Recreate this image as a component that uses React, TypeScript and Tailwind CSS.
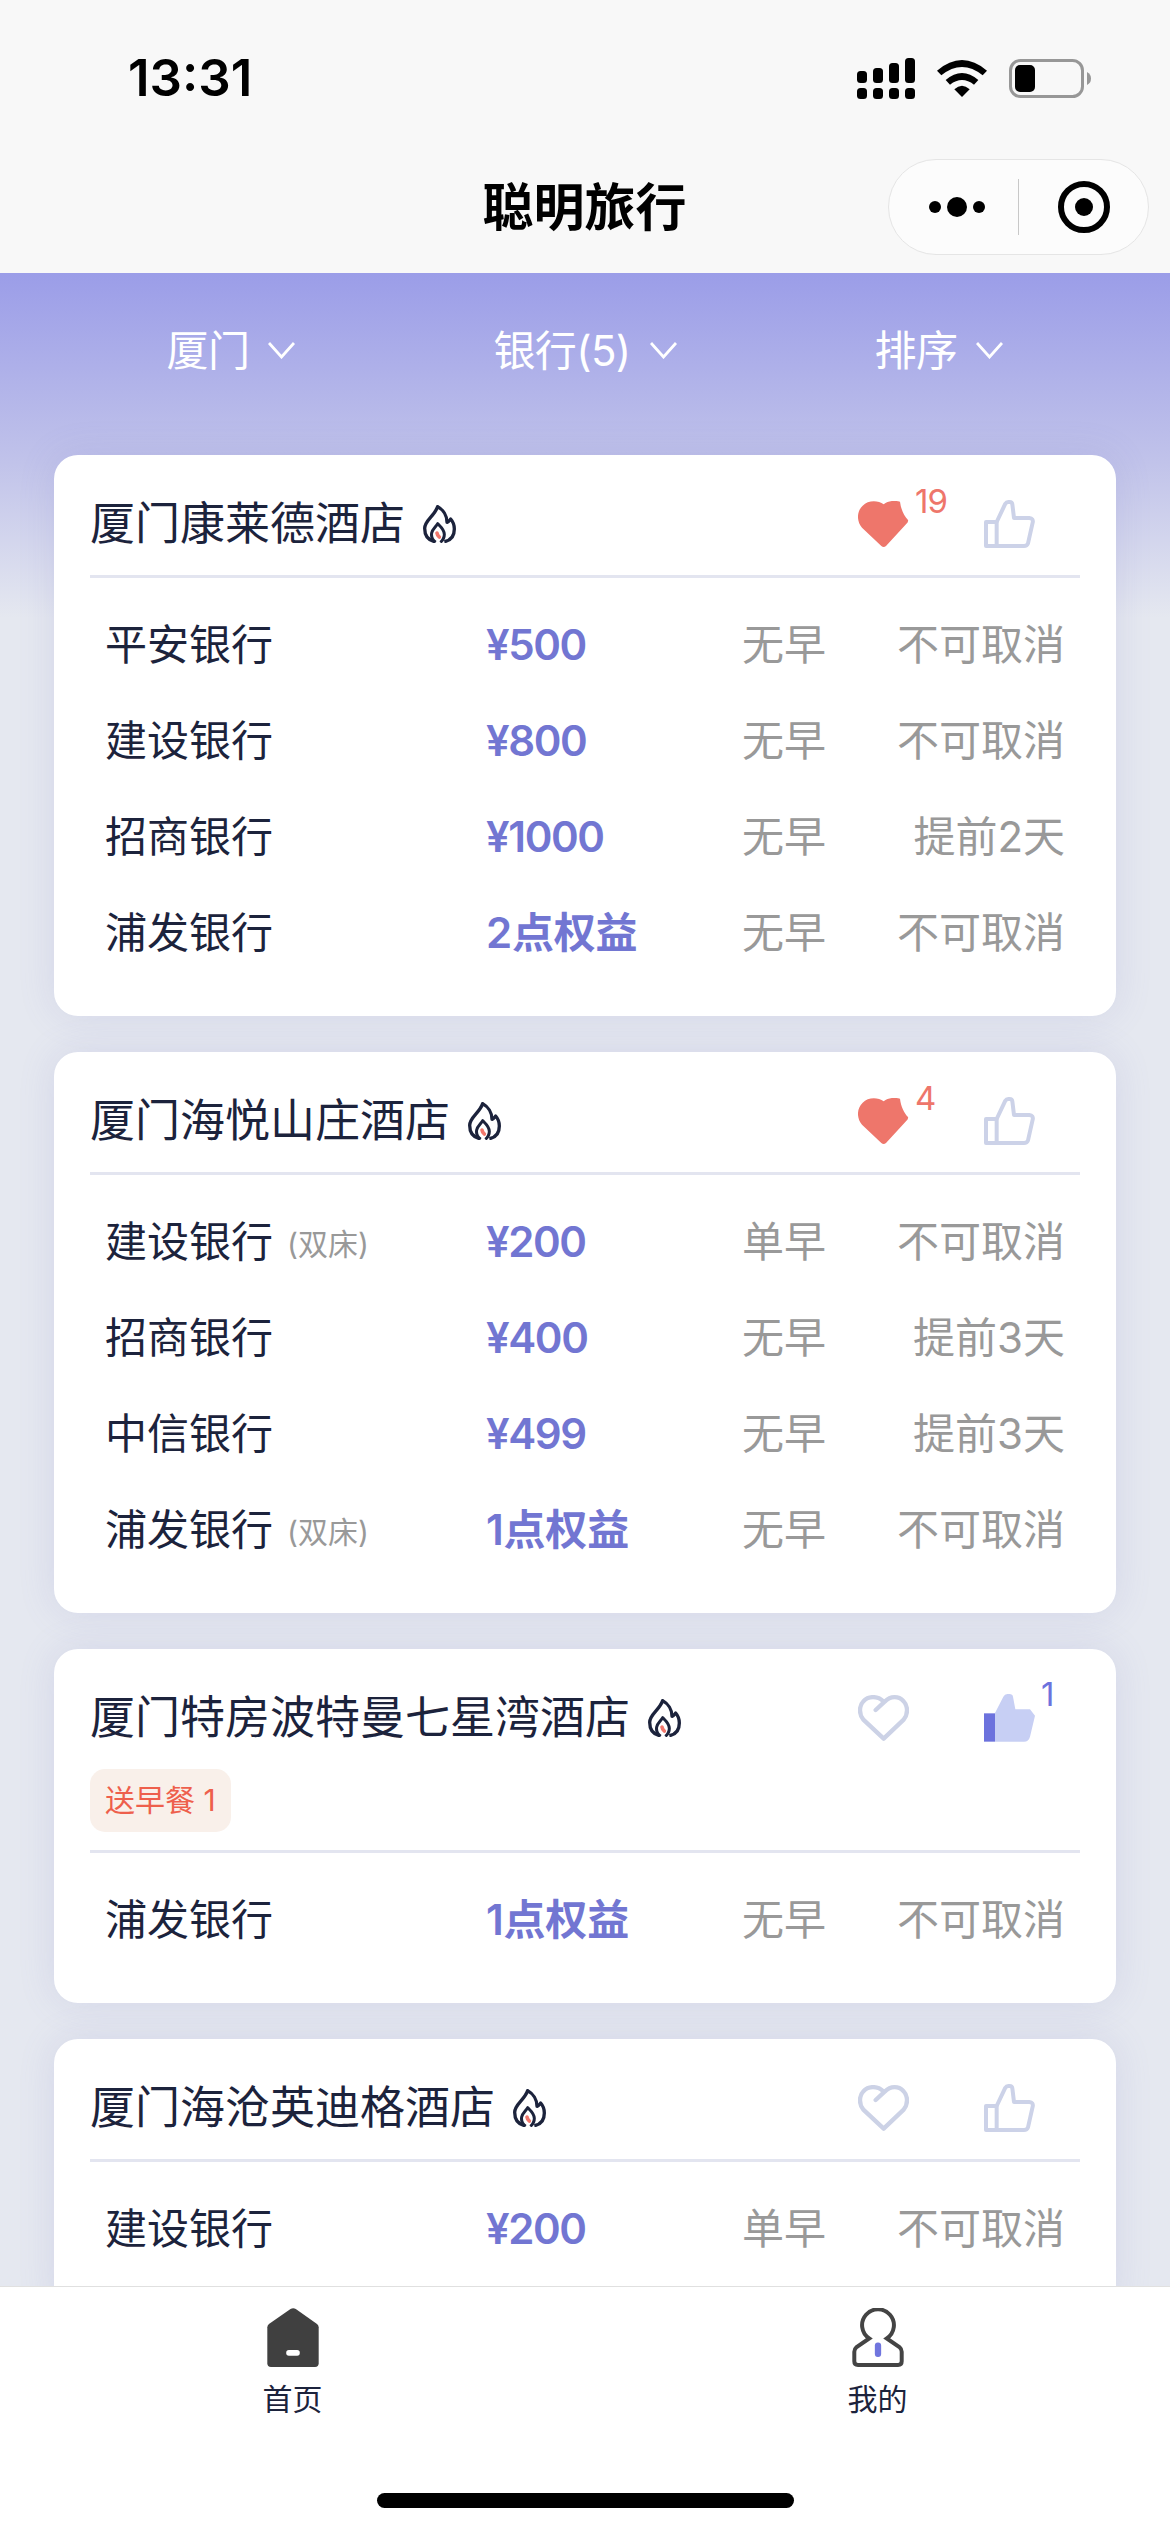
import { ReactNode } from 'react'
import clsx from 'clsx'

interface Offer {
    bank: string;
    note?: string;
    price: string;
    breakfast: string;
    cancel: string;
}

interface Hotel {
    name: string;
    tag?: string;
    likes?: number;
    thumbs?: number;
    offers: Offer[];
}

const filters = ['厦门', '银行(5)', '排序'];

const hotels: Hotel[] = [
    {
        name: '厦门康莱德酒店',
        likes: 19,
        offers: [
            { bank: '平安银行', price: '¥500', breakfast: '无早', cancel: '不可取消' },
            { bank: '建设银行', price: '¥800', breakfast: '无早', cancel: '不可取消' },
            { bank: '招商银行', price: '¥1000', breakfast: '无早', cancel: '提前2天' },
            { bank: '浦发银行', price: '2点权益', breakfast: '无早', cancel: '不可取消' },
        ],
    },
    {
        name: '厦门海悦山庄酒店',
        likes: 4,
        offers: [
            { bank: '建设银行', note: '(双床)', price: '¥200', breakfast: '单早', cancel: '不可取消' },
            { bank: '招商银行', price: '¥400', breakfast: '无早', cancel: '提前3天' },
            { bank: '中信银行', price: '¥499', breakfast: '无早', cancel: '提前3天' },
            { bank: '浦发银行', note: '(双床)', price: '1点权益', breakfast: '无早', cancel: '不可取消' },
        ],
    },
    {
        name: '厦门特房波特曼七星湾酒店',
        tag: '送早餐 1',
        thumbs: 1,
        offers: [
            { bank: '浦发银行', price: '1点权益', breakfast: '无早', cancel: '不可取消' },
        ],
    },
    {
        name: '厦门海沧英迪格酒店',
        offers: [
            { bank: '建设银行', price: '¥200', breakfast: '单早', cancel: '不可取消' },
        ],
    },
];

const SignalIcon = () => (
    <svg width="58" height="41" viewBox="0 0 58 41">
        <rect x="0" y="13" width="10" height="12" rx="3.5" />
        <rect x="16" y="10" width="10" height="15" rx="3.5" />
        <rect x="32" y="5" width="10" height="20" rx="3.5" />
        <rect x="48" y="0" width="10" height="25" rx="3.5" />
        {[0, 16, 32, 48].map((x) => (
            <rect key={x} x={x} y="30" width="10" height="11" rx="3.5" />
        ))}
    </svg>
)

const WifiIcon = () => (
    <svg width="50" height="37" viewBox="0 0 150 111">
        <path d="M0 32 Q75 -32 150 32 L137 46 Q75 -4 13 46 Z" />
        <path d="M26 60 Q75 18 124 60 L111 74 Q75 46 39 74 Z" />
        <path d="M52 88 Q75 66 98 88 L75 111 Z" />
    </svg>
)

const BatteryIcon = () => (
    <svg width="82" height="39" viewBox="0 0 82 39">
        <rect x="1.5" y="1.5" width="72" height="36" rx="10" fill="none" stroke="#979797" strokeWidth="3" />
        <rect x="6" y="6" width="20" height="27" rx="5" />
        <path d="M78 13 Q82 15 82 19.500 Q82 24 78 26 Z" fill="#979797" />
    </svg>
)

const FlameIcon = () => (
    <svg width="33" height="38" viewBox="0 0 99 114" fill="none" stroke="#1c233c" strokeWidth="10" strokeLinejoin="round">
        <path d="M36 110 C14 106 5 90 5 70 C5 46 34 34 44 5 C60 14 72 32 72 52 C78 50 80 46 83 42 C92 52 94 60 94 72 C94 92 86 106 64 110" />
        <path d="M38 112 C28 105 24 96 26 84 C28 72 38 66 44 56 C54 66 64 74 64 88 C64 98 60 106 52 112" strokeWidth="9" />
        <path d="M42 84 Q43 92 49 96" stroke="#f1776c" strokeWidth="11" strokeLinecap="round" />
    </svg>
)

const HeartIcon = ({ active }: { active: boolean }) => (
    <svg width="51" height="46" viewBox="0 0 153 138">
        {active ? (
            <path fill="#ee766b" d="M77 10 C60 -3 30 -3 14 14 C-5 32 -4 62 12 80 L70 135 Q77 141 84 135 L144 70 Q152 62 150 57 C138 44 129 26 126 2 C106 -3 90 0 77 10Z" />
        ) : (
            <path
                fill="none"
                stroke="#ccd2e6"
                strokeWidth="13"
                strokeLinecap="round"
                strokeLinejoin="round"
                d="M53 45 L80 20 C98 2 122 3 136 18 C151 33 150 58 137 74 L77 131 L16 74 C3 58 2 33 17 18 C31 3 58 2 75 18"
            />
        )}
    </svg>
)

const ThumbIcon = ({ active }: { active: boolean }) => (
    <svg width="51" height="48" viewBox="0 0 153 144">
        {active ? (
            <>
                <path fill="#c7cff4" d="M33 57 L58 8 Q62 0 70 0 H76 Q86 0 87 8 L94 46 H138 L153 65 L138 128 Q134 143 120 143 H33Z" />
                <path fill="#6c72dd" d="M0 58 H33 V143 H0Z" />
            </>
        ) : (
            <g fill="none" stroke="#ccd2e8" strokeWidth="12" strokeLinejoin="round">
                <path d="M6 66 H38 V138 H6Z" />
                <path d="M38 66 L64 11 Q67 6 73 6 H77 Q84 6 85 13 L90 54 H136 Q149 55 146 68 L132 130 Q129 138 120 138 H38" />
            </g>
        )}
    </svg>
)

const HomeIcon = () => (
    <svg width="52" height="59" viewBox="0 0 155 178">
        <path fill="#404040" d="M70 3 Q78 -2 86 3 L150 48 Q155 52 155 58 V167 Q155 178 144 178 H11 Q0 178 0 167 V58 Q0 52 5 48Z" />
        <rect x="57" y="127" width="41" height="17" rx="8" fill="#fff" />
    </svg>
)

const UserIcon = () => (
    <svg width="52" height="59" viewBox="0 0 155 178">
        <path
            fill="none"
            stroke="#444"
            strokeWidth="12"
            d="M51 92 A48 48 0 1 1 104 92 L142 118 Q149 124 149 132 V161 Q149 172 138 172 H17 Q6 172 6 161 V132 Q6 124 13 118 Z"
        />
        <rect x="68" y="104" width="19" height="44" rx="9" fill="#7075de" />
    </svg>
)

const Counter = ({ value, className }: { value?: number; className: string }) => {
    if (!value) return null;
    return <span className={clsx('ml-1.5 -mt-4 text-[33px] leading-[33px] tracking-[-1px]', className)}>{value}</span>
}

const HotelCard = ({ hotel }: { hotel: Hotel }) => {
    const { name, tag, likes, thumbs, offers } = hotel;
    return (
        <div className="rounded-[24px] bg-white px-9 pt-[37px] pb-9 shadow-[0_0_36px_rgba(120,120,190,0.16)]">
            <div className={clsx('border-b-3 border-[#e3e5f0]', tag ? 'pb-[18px]' : 'pb-5')}>
                <div className="flex h-[63px] items-center">
                    <span className="mr-[18px] text-[45px] leading-[63px] text-[#1c233c]">{name}</span>
                    <FlameIcon />
                    <div className="ml-auto flex w-[126px] items-start">
                        <HeartIcon active={!!likes} />
                        <Counter value={likes} className="text-[#ee766b]" />
                    </div>
                    <div className="flex w-24 items-start">
                        <ThumbIcon active={!!thumbs} />
                        <Counter value={thumbs} className="text-[#6c72dd]" />
                    </div>
                </div>
                {tag && (
                    <div className="mt-5 flex">
                        <span className="h-[63px] rounded-[15px] bg-[#f9f0ea] px-[15px] text-[30px] leading-[63px] text-[#ee5f4c]">{tag}</span>
                    </div>
                )}
            </div>
            <div className="px-[15px] pt-[18px] text-[42px]">
                {offers.map((offer) => (
                    <div key={offer.bank} className="flex h-24 items-center whitespace-nowrap">
                        <div className="flex w-[381px] items-center text-[#1c233c]">
                            {offer.bank}
                            {offer.note && <span className="mt-1.5 ml-3.5 text-[30px] text-[#999]">{offer.note}</span>}
                        </div>
                        <div
                            className={clsx(
                                'w-[256px] font-semibold text-[#7276d2]',
                                offer.price.startsWith('¥') ? 'tracking-[-1.4px]' : 'tracking-[-0.2px]'
                            )}
                        >
                            {offer.price}
                        </div>
                        <div className="text-[#999]">{offer.breakfast}</div>
                        <div className="ml-auto text-[#999]">{offer.cancel}</div>
                    </div>
                ))}
            </div>
        </div>
    )
}

const TabItem = ({ icon, label }: { icon: ReactNode; label: string }) => (
    <div className="flex flex-1 flex-col items-center pt-[21px] text-[30px] leading-[42px] text-[#1c233c]">
        {icon}
        <span className="mt-[11px]">{label}</span>
    </div>
)

const App = () => {
    return (
        <div className="flex h-[2532px] w-[1170px] flex-col overflow-hidden bg-[#e5e8f0] font-[Inter,'Noto_Sans_CJK_SC',sans-serif]">
            <header className="h-[273px] shrink-0 bg-[#f8f8f8] text-black">
                <div className="flex h-[156px] items-center pr-[79px] pl-[128px]">
                    <span className="text-[51px] font-semibold">13:31</span>
                    <div className="ml-auto flex items-center gap-[22px]">
                        <SignalIcon />
                        <WifiIcon />
                        <BatteryIcon />
                    </div>
                </div>
                <div className="grid h-[102px] grid-cols-[1fr_auto_1fr] items-center pr-[21px]">
                    <span />
                    <h1 className="pt-0.5 pl-5 text-[51px] font-bold">聪明旅行</h1>
                    <div className="ml-auto flex h-24 w-[261px] items-center rounded-full border border-[#e5e5e5] bg-[#fcfcfc]">
                        <div className="flex w-[129px] items-center justify-center gap-1.5 pl-[7px]">
                            <i className="size-3 rounded-full bg-black" />
                            <i className="size-5 rounded-full bg-black" />
                            <i className="size-3 rounded-full bg-black" />
                        </div>
                        <div className="h-14 w-px bg-[#c8c8c8]" />
                        <div className="flex flex-1 justify-center">
                            <div className="flex size-[52px] items-center justify-center rounded-full border-6 border-black">
                                <i className="size-[18px] rounded-full bg-black" />
                            </div>
                        </div>
                    </div>
                </div>
            </header>

            <main className="flex-1 overflow-hidden bg-[linear-gradient(to_bottom,#9b9de8_0px,#c1c3ea_190px,#e5e8f0_345px)] px-[54px]">
                <div className="flex h-[182px] pt-[45px]">
                    {filters.map((filter) => (
                        <div key={filter} className="flex h-16 flex-1 items-center justify-center gap-[19px] text-[42px] tracking-[-0.6px] text-white">
                            {filter}
                            <svg width="27" height="17" viewBox="0 0 27 17" fill="none" stroke="#fff" strokeWidth="2.8">
                                <path d="M1 1 L13.500 15 L26 1" />
                            </svg>
                        </div>
                    ))}
                </div>
                <div className="flex flex-col gap-9">
                    {hotels.map((hotel) => (
                        <HotelCard key={hotel.name} hotel={hotel} />
                    ))}
                </div>
            </main>

            <footer className="flex h-[246px] shrink-0 flex-col border-t border-[#e0e0e0] bg-white">
                <div className="flex">
                    <TabItem icon={<HomeIcon />} label="首页" />
                    <TabItem icon={<UserIcon />} label="我的" />
                </div>
                <div className="mx-auto mt-auto mb-6 h-[15px] w-[417px] rounded-full bg-black" />
            </footer>
        </div>
    )
}

export default App;
